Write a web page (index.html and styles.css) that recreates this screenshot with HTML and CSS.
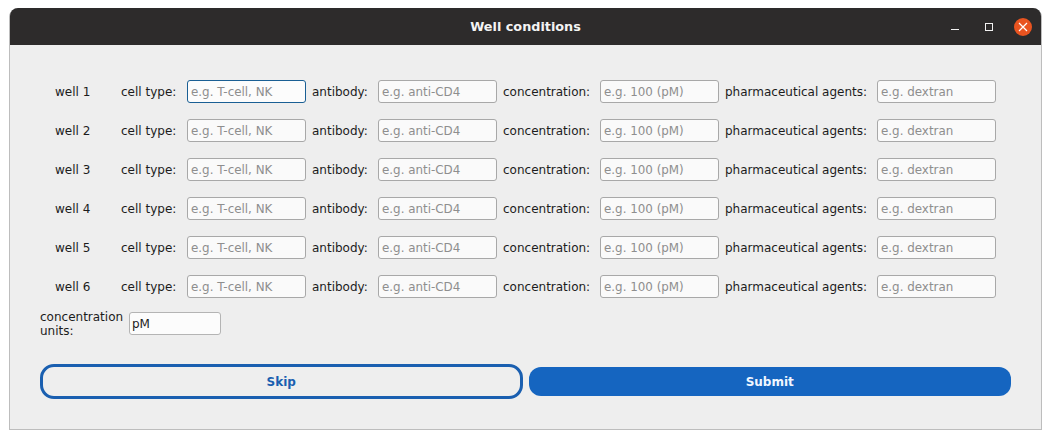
FILE: index.html
```html
<!DOCTYPE html>
<html lang="en">
<head>
    <meta charset="UTF-8">
    <meta name="viewport" content="width=device-width, initial-scale=1.0">
    <title>Well conditions</title>
    <link rel="stylesheet" href="styles.css">
</head>
<body>
    <div class="window">
        <div class="titlebar">
            <span class="title">Well conditions</span>
            <div class="controls">
                <span class="minimize"></span>
                <span class="maximize"></span>
                <span class="close">
                    <svg width="10" height="10" viewBox="0 0 10 10"><path d="M1 1L9 9M9 1L1 9" stroke="#fff" stroke-width="1.2" fill="none"/></svg>
                </span>
            </div>
        </div>
        <div class="content">
            <div class="wells">
                <div class="well-row">
                    <span class="well-name">well 1</span>
                    <label class="lbl-cell">cell type:</label>
                    <input class="field focused" type="text" placeholder="e.g. T-cell, NK">
                    <label class="lbl-antibody">antibody:</label>
                    <input class="field" type="text" placeholder="e.g. anti-CD4">
                    <label class="lbl-conc">concentration:</label>
                    <input class="field" type="text" placeholder="e.g. 100 (pM)">
                    <label class="lbl-agents">pharmaceutical agents:</label>
                    <input class="field" type="text" placeholder="e.g. dextran">
                </div>
                <div class="well-row">
                    <span class="well-name">well 2</span>
                    <label class="lbl-cell">cell type:</label>
                    <input class="field" type="text" placeholder="e.g. T-cell, NK">
                    <label class="lbl-antibody">antibody:</label>
                    <input class="field" type="text" placeholder="e.g. anti-CD4">
                    <label class="lbl-conc">concentration:</label>
                    <input class="field" type="text" placeholder="e.g. 100 (pM)">
                    <label class="lbl-agents">pharmaceutical agents:</label>
                    <input class="field" type="text" placeholder="e.g. dextran">
                </div>
                <div class="well-row">
                    <span class="well-name">well 3</span>
                    <label class="lbl-cell">cell type:</label>
                    <input class="field" type="text" placeholder="e.g. T-cell, NK">
                    <label class="lbl-antibody">antibody:</label>
                    <input class="field" type="text" placeholder="e.g. anti-CD4">
                    <label class="lbl-conc">concentration:</label>
                    <input class="field" type="text" placeholder="e.g. 100 (pM)">
                    <label class="lbl-agents">pharmaceutical agents:</label>
                    <input class="field" type="text" placeholder="e.g. dextran">
                </div>
                <div class="well-row">
                    <span class="well-name">well 4</span>
                    <label class="lbl-cell">cell type:</label>
                    <input class="field" type="text" placeholder="e.g. T-cell, NK">
                    <label class="lbl-antibody">antibody:</label>
                    <input class="field" type="text" placeholder="e.g. anti-CD4">
                    <label class="lbl-conc">concentration:</label>
                    <input class="field" type="text" placeholder="e.g. 100 (pM)">
                    <label class="lbl-agents">pharmaceutical agents:</label>
                    <input class="field" type="text" placeholder="e.g. dextran">
                </div>
                <div class="well-row">
                    <span class="well-name">well 5</span>
                    <label class="lbl-cell">cell type:</label>
                    <input class="field" type="text" placeholder="e.g. T-cell, NK">
                    <label class="lbl-antibody">antibody:</label>
                    <input class="field" type="text" placeholder="e.g. anti-CD4">
                    <label class="lbl-conc">concentration:</label>
                    <input class="field" type="text" placeholder="e.g. 100 (pM)">
                    <label class="lbl-agents">pharmaceutical agents:</label>
                    <input class="field" type="text" placeholder="e.g. dextran">
                </div>
                <div class="well-row">
                    <span class="well-name">well 6</span>
                    <label class="lbl-cell">cell type:</label>
                    <input class="field" type="text" placeholder="e.g. T-cell, NK">
                    <label class="lbl-antibody">antibody:</label>
                    <input class="field" type="text" placeholder="e.g. anti-CD4">
                    <label class="lbl-conc">concentration:</label>
                    <input class="field" type="text" placeholder="e.g. 100 (pM)">
                    <label class="lbl-agents">pharmaceutical agents:</label>
                    <input class="field" type="text" placeholder="e.g. dextran">
                </div>
            </div>
            <div class="units-row">
                <label class="units-label">concentration units:</label>
                <input class="units-field" type="text" value="pM">
            </div>
            <div class="actions">
                <button class="btn btn-skip" type="button">Skip</button>
                <button class="btn btn-submit" type="button">Submit</button>
            </div>
        </div>
    </div>
</body>
</html>
```

FILE: styles.css
```css
body {
    margin: 0;
    background-color: #fff;
    font-family: "DejaVu Sans", sans-serif;
    font-size: 12px;
    color: #1c1c1c;
}
.window {
    width: 1033px;
    height: 422px;
    margin: 8px 0 0 9px;
    box-sizing: border-box;
    display: flex;
    flex-direction: column;
    background-color: #eeeeee;
    border: 1px solid #bdbdbd;
    border-top: none;
    border-radius: 9px 9px 0 0;
}
.titlebar {
    height: 37px;
    flex-shrink: 0;
    display: flex;
    align-items: center;
    justify-content: center;
    position: relative;
    background-color: #2d2b2b;
    border-radius: 8px 8px 0 0;
}
.title {
    color: #f4f4f4;
    font-size: 12.8px;
    font-weight: bold;
}
.controls {
    position: absolute;
    top: 0;
    right: 9px;
    height: 100%;
    display: flex;
    align-items: center;
}
.minimize {
    width: 8px;
    height: 1px;
    margin: 6px 26px 0 0;
    background-color: #f2f2f2;
}
.maximize {
    width: 6px;
    height: 6px;
    margin-right: 21px;
    border: 1px solid #f2f2f2;
}
.close {
    width: 18px;
    height: 18px;
    display: flex;
    align-items: center;
    justify-content: center;
    border-radius: 50%;
    background-color: #e95420;
}
.content {
    flex: 1;
    padding: 35px 30px 0;
}
.wells {
    display: flex;
    flex-direction: column;
    gap: 16px;
}
.well-row {
    display: flex;
    align-items: center;
    height: 23px;
}
.well-name {
    width: 81px;
    padding-left: 15px;
    box-sizing: border-box;
    flex-shrink: 0;
}
.well-row label {
    flex-shrink: 0;
}
.lbl-cell {
    width: 66px;
}
.lbl-antibody {
    width: 66px;
    margin-left: 6px;
}
.lbl-conc {
    width: 97px;
    margin-left: 6px;
}
.lbl-agents {
    width: 152px;
    margin-left: 6px;
}
.field {
    width: 119px;
    height: 23px;
    box-sizing: border-box;
    flex-shrink: 0;
    padding: 0 3px;
    background-color: #fafafa;
    border: 1px solid #a8a8a8;
    border-radius: 3px;
    font-family: inherit;
    font-size: 11.9px;
    outline: none;
}
.field::placeholder {
    color: #8e8e8e;
    opacity: 1;
}
.focused {
    border-color: #1a5f94;
    background-color: #fcfcfc;
}
.units-row {
    display: flex;
    align-items: center;
    height: 23px;
    margin-top: 14px;
}
.units-label {
    width: 89px;
    line-height: 14px;
    flex-shrink: 0;
}
.units-field {
    width: 92px;
    height: 23px;
    box-sizing: border-box;
    padding: 0 2px;
    background-color: #fcfcfc;
    border: 1px solid #b4b4b4;
    border-radius: 3px;
    font-family: inherit;
    font-size: 12px;
    color: #1c1c1c;
    outline: none;
}
.actions {
    display: grid;
    grid-template-columns: 1fr 1fr;
    align-items: center;
    gap: 6px;
    margin-top: 29px;
}
.btn {
    box-sizing: border-box;
    font-family: inherit;
    font-size: 12px;
    font-weight: bold;
    cursor: pointer;
}
.btn-skip {
    height: 35px;
    background-color: transparent;
    border: 3px solid #1a5fb0;
    border-radius: 14px;
    color: #1a5fb0;
}
.btn-submit {
    height: 29px;
    background-color: #1565c0;
    border: none;
    border-radius: 12px;
    color: #f0f6ff;
}
```
